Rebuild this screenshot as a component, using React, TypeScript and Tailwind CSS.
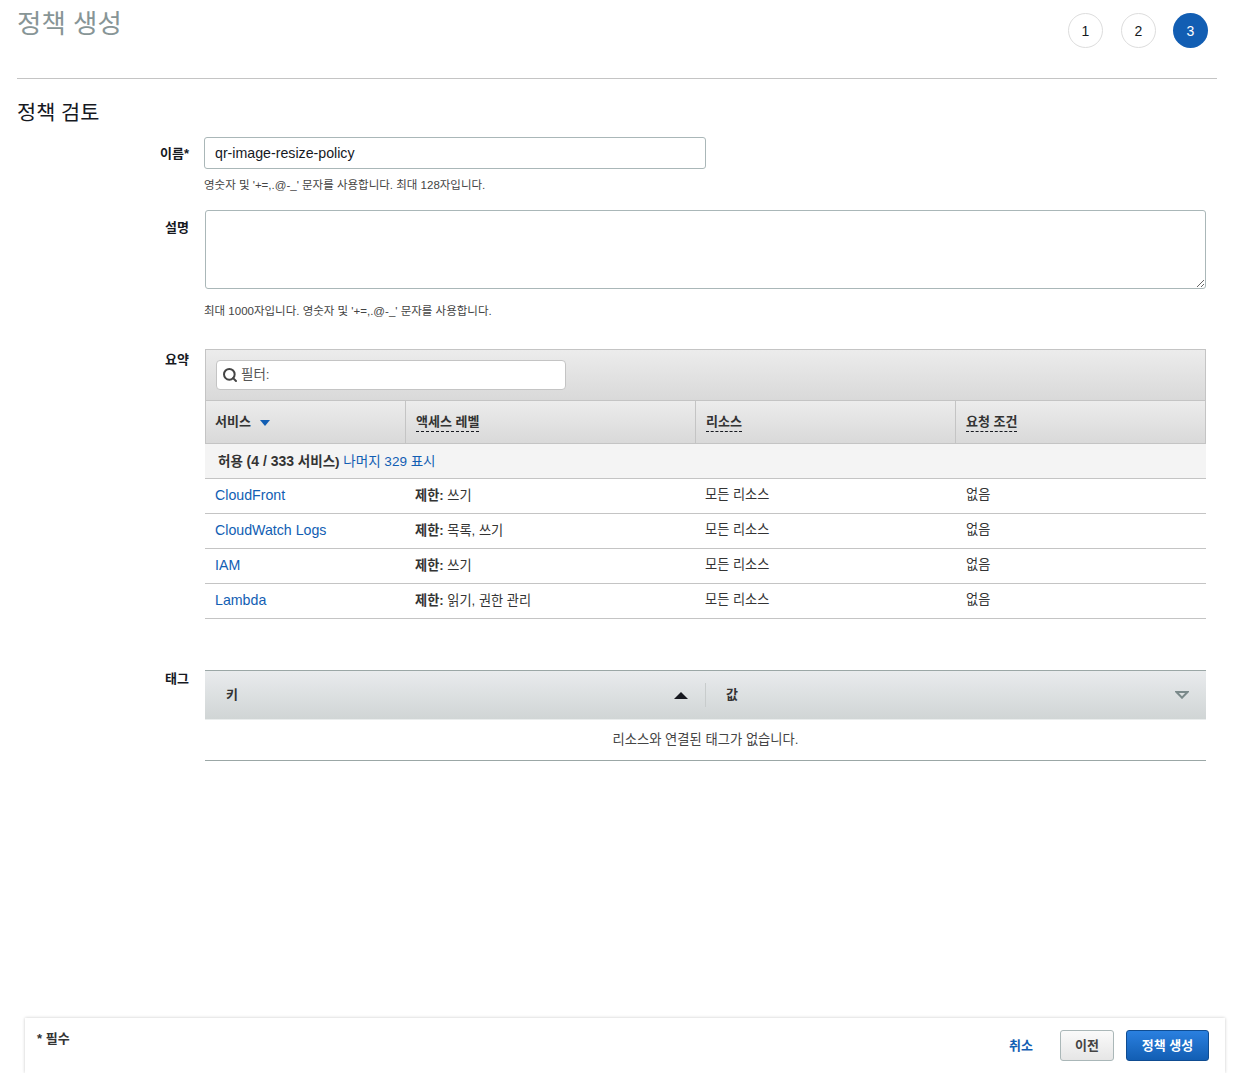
import React from 'react';
import { Search } from 'lucide-react';

const rows = [
  { service: 'CloudFront', access: '쓰기' },
  { service: 'CloudWatch Logs', access: '목록, 쓰기' },
  { service: 'IAM', access: '쓰기' },
  { service: 'Lambda', access: '읽기, 권한 관리' },
];

const Dashed = ({ children }: { children: React.ReactNode }) => (
  <span className="border-b border-dashed border-[#16191f] leading-[18px] inline-block">{children}</span>
);

const FormLabel = ({ children }: { children: React.ReactNode }) => (
  <div className="w-[172px] shrink-0 text-right text-[13px] font-bold text-[#16191f] leading-[18px]">{children}</div>
);

const App = () => {
  return (
    <div className="relative h-[1073px] w-[1237px] overflow-hidden bg-white font-['Liberation_Sans','Noto_Sans_CJK_KR',sans-serif] text-sm text-[#16191f]">
      <div className="mx-[17px] w-[1200px] h-[79px] border-b border-[#c4c4c4] flex justify-between">
        <h1 className="text-[26.5px] leading-[48px] text-[#879596]">정책 생성</h1>
        <div className="flex pt-[13px] pr-[9px]">
          <div className="w-[35px] h-[35px] mr-[18px] rounded-full border border-[#dddddd] flex items-center justify-center text-sm">1</div>
          <div className="w-[35px] h-[35px] mr-[17px] rounded-full border border-[#dddddd] flex items-center justify-center text-sm">2</div>
          <div className="w-[35px] h-[35px] rounded-full bg-[#125eb3] text-white flex items-center justify-center text-sm">3</div>
        </div>
      </div>

      <div className="pl-[17px]">
        <h2 className="text-[20.8px] leading-[30px] mt-[19px] text-[#16191f]">정책 검토</h2>

        <div className="flex gap-[15px] mt-[9px]">
          <div className="pt-[8px]"><FormLabel>이름*</FormLabel></div>
          <div>
            <div className="w-[502px] h-[32px] border border-[#aab7b8] rounded-[3px] px-[10px] leading-[30px] text-[14.2px] text-[#16191f]">qr-image-resize-policy</div>
            <p className="text-[11.5px] leading-[16px] mt-[8px] text-[#444444]">영숫자 및 '+=,.@-_' 문자를 사용합니다. 최대 128자입니다.</p>
          </div>
        </div>

        <div className="flex gap-[16px] mt-[17px]">
          <div className="pt-[9px]"><FormLabel>설명</FormLabel></div>
          <div>
            <textarea className="block w-[1001px] h-[79px] border border-[#aab7b8] rounded-[3px] resize-y" />
            <p className="text-[11.5px] leading-[16px] mt-[14px] -ml-px text-[#444444]">최대 1000자입니다. 영숫자 및 '+=,.@-_' 문자를 사용합니다.</p>
          </div>
        </div>

        <div className="flex gap-[16px] mt-[30px]">
          <div className="pt-[2px]"><FormLabel>요약</FormLabel></div>
          <div className="w-[1001px]">
            <div className="h-[52px] border border-[#c4c4c4] bg-gradient-to-b from-[#ececec] to-[#d9d9d9] pl-[10px] pt-[10px]">
              <div className="w-[350px] h-[30px] bg-white border border-[#c4c4c4] rounded-[4px] flex items-center pl-[5px] gap-[3px] text-[13.5px] text-[#555555]">
                <Search size={16} strokeWidth={3} className="text-[#444444]" />
                <span>필터:</span>
              </div>
            </div>
            <div className="grid grid-cols-[199px_290px_260px_250px] h-[43px] border-x border-b border-[#c4c4c4] bg-gradient-to-b from-[#ececec] to-[#d9d9d9] text-[13px] font-bold text-[#333333]">
              <div className="pl-[9px] pt-[12px] flex items-start gap-[9px]">
                <span className="leading-[18px]">서비스</span>
                <svg width="10" height="6" viewBox="0 0 10 6" className="mt-[7px]"><path d="M0 0h10L5 6z" fill="#125eb3" /></svg>
              </div>
              <div className="border-l border-[#c4c4c4] pl-[10px] pt-[12px]"><Dashed>액세스 레벨</Dashed></div>
              <div className="border-l border-[#c4c4c4] pl-[10px] pt-[12px]"><Dashed>리소스</Dashed></div>
              <div className="border-l border-[#c4c4c4] pl-[10px] pt-[12px]"><Dashed>요청 조건</Dashed></div>
            </div>
            <div className="h-[35px] bg-[#f4f4f4] border-b border-[#c4c4c4] pl-[13px] leading-[35px] text-[13.5px]">
              <span className="font-bold text-[#333333]">허용 <span className="text-sm">(4 / 333</span> 서비스)</span>{' '}
              <span className="text-[#125eb3]">나머지 329 표시</span>
            </div>
            {rows.map((row) => (
              <div key={row.service} className="grid grid-cols-[200px_290px_260px_251px] h-[35px] border-b border-[#c4c4c4] items-center text-[13.2px] text-[#333333]">
                <div className="pl-[10px] pb-[2px] text-[14.2px] text-[#125eb3]">{row.service}</div>
                <div className="pl-[10px]"><span className="font-bold">제한:</span> {row.access}</div>
                <div className="pl-[10px] pb-[2px]">모든 리소스</div>
                <div className="pl-[11px] pb-[2px]">없음</div>
              </div>
            ))}
          </div>
        </div>

        <div className="flex gap-[16px] mt-[51px]">
          <FormLabel>태그</FormLabel>
          <div className="w-[1001px]">
            <div className="h-[50px] border-t border-b border-t-[#9ba7a6] border-b-[#eaeded] bg-gradient-to-b from-[#e9ebed] to-[#d0d5d5] flex items-center">
              <div className="w-[501px] h-[24px] flex items-center justify-between pl-[21px] pr-[17px] border-r border-[#c8cccc] text-[13px] font-bold text-[#333333]">
                <span>키</span>
                <svg width="14" height="7" viewBox="0 0 14 7"><path d="M7 0l7 7H0z" fill="#16191f" /></svg>
              </div>
              <div className="flex-1 flex items-center justify-between pl-[20px] pr-[17px] text-[13px] font-bold text-[#333333]">
                <span>값</span>
                <svg width="14" height="8" viewBox="0 0 14 8"><path d="M1.5 1h11L7 6.7z" fill="none" stroke="#7b8a8b" strokeWidth="2" /></svg>
              </div>
            </div>
            <div className="h-[41px] border-b border-[#9ba7a6] pt-[1px] flex items-center justify-center text-[13.3px] text-[#444444]">리소스와 연결된 태그가 없습니다.</div>
          </div>
        </div>
      </div>

      <div className="absolute left-[25px] top-[1018px] w-[1200px] h-[55px] bg-white shadow-[0_0_3px_rgba(0,0,0,0.22)] flex justify-between pl-[12px] pr-[16px]">
        <div className="text-[13px] font-bold leading-[18px] pt-[12px] text-[#333333]">* 필수</div>
        <div className="flex items-start pt-[12px] text-[13px] font-bold">
          <span className="text-[#125eb3] leading-[31px] mr-[27px]">취소</span>
          <div className="w-[54px] h-[31px] pt-[1px] rounded-[3px] border border-[#aab7b8] bg-gradient-to-b from-[#fafafa] to-[#e6e6e6] text-[#444444] flex items-center justify-center mr-[12px]">이전</div>
          <div className="w-[83px] h-[31px] pt-[1px] rounded-[3px] border border-[#0f4c91] bg-gradient-to-b from-[#2a80e0] to-[#125eb3] text-white flex items-center justify-center">정책 생성</div>
        </div>
      </div>
    </div>
  );
};

export default App;
